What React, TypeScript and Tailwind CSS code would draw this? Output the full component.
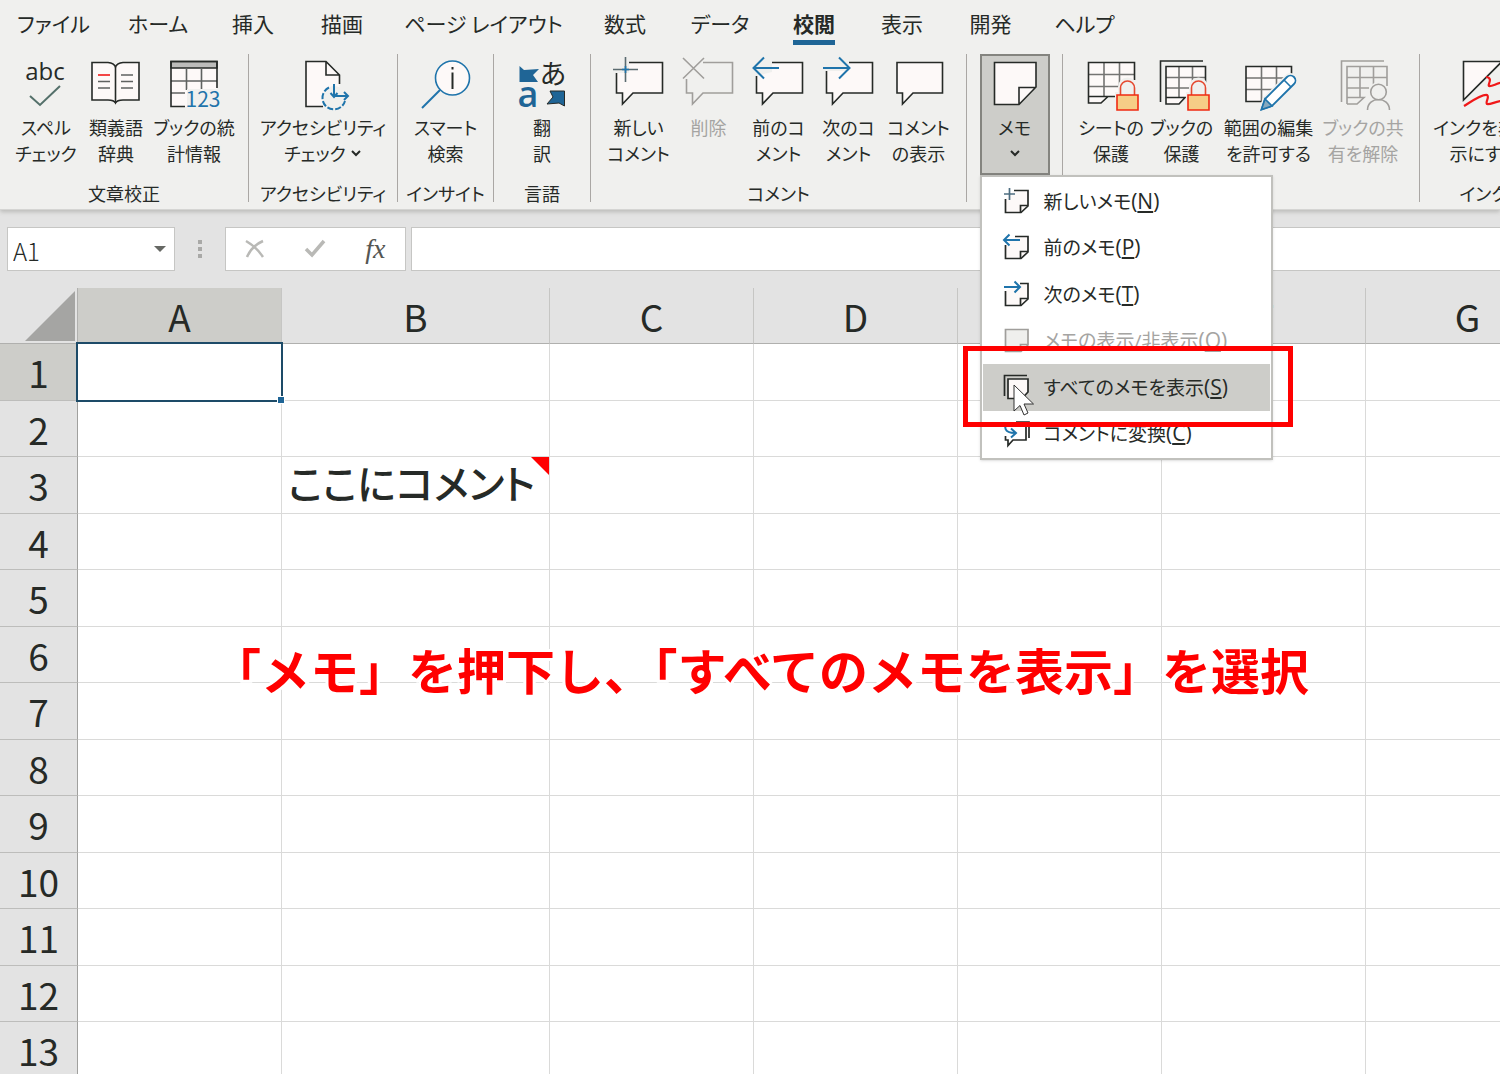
import { ReactNode, useState } from "react";

interface IIconProps {
  children: ReactNode;
  color?: string;
}

interface IRibbonItem {
  name: string;
  lines: string[];
  icon: ReactNode;
  width: string;
  disabled?: boolean;
  arrow?: boolean;
}

interface IMemoItem {
  text: string;
  accessKey: string;
  icon: ReactNode;
  disabled?: boolean;
  selected?: boolean;
}

const BLUE = "#1f74ab";
const DARK = "#262a27";
const GRAY = "#a09e9b";
const PAPER = "#fdf9f8";

const tabs = [
  { name: "ファイル", width: "w-[107px]" },
  { name: "ホーム", width: "w-[102px]" },
  { name: "挿入", width: "w-[88px]" },
  { name: "描画", width: "w-[90px]" },
  { name: "ページ レイアウト", width: "w-[193px]" },
  { name: "数式", width: "w-[90px]" },
  { name: "データ", width: "w-[100px]" },
  { name: "校閲", width: "w-[88px]" },
  { name: "表示", width: "w-[88px]" },
  { name: "開発", width: "w-[89px]" },
  { name: "ヘルプ", width: "w-[99px]" },
];

const columns = [
  { name: "A", width: "w-[204px]" },
  { name: "B", width: "w-[268px]" },
  { name: "C", width: "w-[204px]" },
  { name: "D", width: "w-[204px]" },
  { name: "E", width: "w-[204px]" },
  { name: "F", width: "w-[204px]" },
  { name: "G", width: "w-[204px]" },
];

const rows = [1, 2, 3, 4, 5, 6, 7, 8, 9, 10, 11, 12, 13];

function Icon({ children, color = DARK }: IIconProps) {
  return (
    <svg
      className="h-14 w-14 shrink-0 overflow-visible"
      viewBox="0 0 56 56"
      fill="none"
      stroke={color}
      strokeWidth="1.6"
      aria-hidden="true"
    >
      {children}
    </svg>
  );
}

function SmallIcon({ children, color = DARK }: IIconProps) {
  return (
    <svg
      className="h-7 w-7 shrink-0 overflow-visible"
      viewBox="0 0 28 28"
      fill="none"
      stroke={color}
      strokeWidth="1.7"
      aria-hidden="true"
    >
      {children}
    </svg>
  );
}

function Lock() {
  return (
    <>
      <path d="M32 54V34h3v-5a9.500 9.500 0 0 1 19 0v5h3v20z" fill="#f0f0ee" stroke="none" />
      <path d="M37.500 37v-7a7 7 0 0 1 14 0v7" stroke="#e5482f" />
      <path d="M34 37h21v15H34z" fill="#f6cd86" stroke="#f02a12" />
    </>
  );
}

function BookGrid() {
  return (
    <>
      <path d="M6.500 44V3H49" />
      <path d="M12 46V8.500H51.500V40H29L25 46z" fill={PAPER} stroke="none" />
      <path d="M12 19.500H51.500M12 30H51.500M25 8.500V40M38.500 8.500V40" stroke="#747472" />
      <path d="M51.500 26V8.500H12V46H25L31 39.500H12" />
    </>
  );
}

const proofing: IRibbonItem[] = [
  {
    name: "spelling",
    lines: ["スペル", "チェック"],
    width: "w-[70px]",
    icon: (
      <Icon>
        <text
          x="27"
          y="22"
          textAnchor="middle"
          fontSize="24"
          fill={DARK}
          stroke="none"
          className="font-['Open_Sans',sans-serif]"
        >
          abc
        </text>
        <path d="M12 38L22 47L42 28" stroke="#54706a" strokeWidth="2" />
      </Icon>
    ),
  },
  {
    name: "thesaurus",
    lines: ["類義語", "辞典"],
    width: "w-[70px]",
    icon: (
      <Icon>
        <path
          d="M4 4.500H20Q26 5 27.500 9Q29 5 35 4.500H51V42H35Q29 42 27.500 45Q26 42 20 42H4Z"
          fill={PAPER}
        />
        <path d="M27.500 9V45" />
        <path d="M10 23.500H22M10 30H22M33 17H45M33 23.500H45M33 30H45" stroke="#5f6260" />
        <path d="M10 17H22" stroke="#f01818" />
      </Icon>
    ),
  },
  {
    name: "statistics",
    lines: ["ブックの統", "計情報"],
    width: "w-[86px]",
    icon: (
      <Icon>
        <path d="M5 3.500H51V48.500H5z" fill={PAPER} stroke="none" />
        <path d="M5 3.500H51V10H5z" fill="#bcbcba" />
        <path d="M5 23H51M5 35H19M20.500 10V32M35.500 10V32" stroke="#5f6260" />
        <path d="M51 30V3.500H5V48.500H19" />
        <path d="M21 31H54V51H21z" fill="#f0f0ee" stroke="none" />
        <text
          x="37"
          y="49"
          textAnchor="middle"
          fontSize="21"
          fill={BLUE}
          stroke="none"
        >
          123
        </text>
      </Icon>
    ),
  },
];

const accessibility: IRibbonItem[] = [
  {
    name: "accessibility",
    lines: ["アクセシビリティ", "チェック"],
    width: "w-[148px]",
    arrow: true,
    icon: (
      <Icon>
        <path d="M11 48V3.500H31L44.500 17V30L30 48z" fill={PAPER} stroke="none" />
        <path d="M28 48.500H11V3.500H31L44.500 17V26M31 3.500V17H44.500" />
        <circle cx="39" cy="40" r="12" fill="#f0f0ee" stroke="none" />
        <path
          d="M34 29.500A11.500 11.500 0 1 0 50 43"
          stroke={BLUE}
          strokeWidth="2"
          strokeDasharray="6 2"
        />
        <path d="M39 26V39M35.500 35L39 39L42.500 35M40 38H53M49 34L53 38L49 42" stroke={BLUE} strokeWidth="2" />
      </Icon>
    ),
  },
];

const insights: IRibbonItem[] = [
  {
    name: "lookup",
    lines: ["スマート", "検索"],
    width: "w-[94px]",
    icon: (
      <Icon>
        <circle cx="34.500" cy="20" r="17" fill={PAPER} stroke={BLUE} />
        <path d="M22 32L4 50" stroke={BLUE} strokeWidth="2" />
        <path d="M34.500 9v2.500M34.500 14.500V31" strokeWidth="2" />
      </Icon>
    ),
  },
];

const language: IRibbonItem[] = [
  {
    name: "translate",
    lines: ["翻", "訳"],
    width: "w-[94px]",
    icon: (
      <Icon>
        <path d="M5.500 8L10 12L25 11L19 17L24 24H5.500z" fill="#1f6596" stroke="none" />
        <path d="M36 33H50.500V48L45 45L33 46L39 39z" fill="#1f6596" strokeWidth="1" />
        <text x="39" y="26" textAnchor="middle" fontSize="27" fill={DARK} stroke="none">
          あ
        </text>
        <text
          x="14"
          y="49"
          textAnchor="middle"
          fontSize="36"
          fontWeight="600"
          fill="#1f6596"
          stroke="none"
          className="font-['Open_Sans',sans-serif]"
        >
          a
        </text>
      </Icon>
    ),
  },
];

const comments: IRibbonItem[] = [
  {
    name: "new-comment",
    lines: ["新しい", "コメント"],
    width: "w-[70px]",
    icon: (
      <Icon>
        <path d="M18 4.500H51.500V35H22L11.500 46V35H5.500V15L18 15z" fill={PAPER} stroke="none" />
        <path d="M18 4.500H51.500V35H22L11.500 46V35H5.500V15" />
        <path d="M14.500 -1V24M2 11.500H27" stroke="#5b6b70" />
        <path d="M14.500 8V15M11 11.500H18" stroke={BLUE} />
      </Icon>
    ),
  },
  {
    name: "delete-comment",
    lines: ["削除"],
    width: "w-[70px]",
    disabled: true,
    icon: (
      <Icon color={GRAY}>
        <path d="M22 4.500H51.500V35H22L11.500 46V35H5.500V21" />
        <path d="M2 0L23 20.500M23 0L2 20.500" />
      </Icon>
    ),
  },
  {
    name: "previous-comment",
    lines: ["前のコ", "メント"],
    width: "w-[70px]",
    icon: (
      <Icon>
        <path d="M21 4.500H51.500V35H22L11.500 46V35H5.500V18L21 14z" fill={PAPER} stroke="none" />
        <path d="M21 4.500H51.500V35H22L11.500 46V35H5.500V18" />
        <path d="M28 10H2M13 -0.500L2.500 10L13 20.500" stroke={BLUE} strokeWidth="2" />
      </Icon>
    ),
  },
  {
    name: "next-comment",
    lines: ["次のコ", "メント"],
    width: "w-[70px]",
    icon: (
      <Icon>
        <path d="M28 4.500H51.500V35H22L11.500 46V35H5.500V13H28z" fill={PAPER} stroke="none" />
        <path d="M28 4.500H51.500V35H22L11.500 46V35H5.500V13" />
        <path d="M2 10H28M18 -0.500L28.500 10L18 20.500" stroke={BLUE} strokeWidth="2" />
      </Icon>
    ),
  },
  {
    name: "show-comments",
    lines: ["コメント", "の表示"],
    width: "w-[70px]",
    icon: (
      <Icon>
        <path d="M6 4.500H51.500V35H22L11.500 46V35H6z" fill={PAPER} />
      </Icon>
    ),
  },
];

const protection: IRibbonItem[] = [
  {
    name: "protect-sheet",
    lines: ["シートの", "保護"],
    width: "w-[70px]",
    icon: (
      <Icon>
        <path d="M5.500 4.500H51.500V38H25L18 45H5.500z" fill={PAPER} stroke="none" />
        <path d="M5.500 16.500H51.500M5.500 28.500H40M21 4.500V38M36.500 4.500V38" stroke="#747472" />
        <path d="M51.500 22V4.500H5.500V45H18L25 38.500H33M5.500 38.500H25" />
        <Lock />
      </Icon>
    ),
  },
  {
    name: "protect-book",
    lines: ["ブックの", "保護"],
    width: "w-[71px]",
    icon: (
      <Icon>
        <BookGrid />
        <Lock />
      </Icon>
    ),
  },
  {
    name: "allow-edit",
    lines: ["範囲の編集", "を許可する"],
    width: "w-[103px]",
    icon: (
      <Icon>
        <path d="M5 8.500H50.500V43.500H5z" fill={PAPER} stroke="none" />
        <path d="M5 20H45M5 31.500H34M20.500 8.500V43.500M35.500 8.500V30" stroke="#747472" />
        <path d="M50.500 16V8.500H5V43.500H22" />
        <path d="M30 44L52 24V46H28z" fill="#f0f0ee" stroke="none" />
        <path
          d="M20.500 51.500L24 41L46 19A4.900 4.900 0 0 1 53 26L31 48z"
          fill="#fff"
          stroke="#f0f0ee"
          strokeWidth="5"
        />
        <path
          d="M20.500 51.500L24 41L46 19A4.900 4.900 0 0 1 53 26L31 48z"
          fill="#fff"
          stroke={BLUE}
          strokeWidth="1.8"
        />
        <path d="M20.500 51.500L24 41L31 48z" fill="#86a9be" stroke={BLUE} />
        <path d="M43 22L50 29" stroke={BLUE} />
      </Icon>
    ),
  },
  {
    name: "unshare-book",
    lines: ["ブックの共", "有を解除"],
    width: "w-[86px]",
    disabled: true,
    icon: (
      <Icon color={GRAY}>
        <path d="M6.500 44V3H49M12 46V8.500H52V28" />
        <path d="M12 19.500H52M12 30H34M25 8.500V40M38.500 8.500V28M12 46H22L29 39.500H12" />
        <circle cx="43.500" cy="34" r="10" fill="#f0f0ee" stroke="none" />
        <path d="M32.500 52C32.500 38 54.500 38 54.500 52" fill="#f0f0ee" />
        <circle cx="43.500" cy="34" r="7.800" fill="#f0f0ee" />
      </Icon>
    ),
  },
];

const ink: IRibbonItem[] = [
  {
    name: "hide-ink",
    lines: ["インクを非表", "示にする"],
    width: "w-[110px]",
    icon: (
      <Icon>
        <path d="M7.500 42V3.500H46z" fill={PAPER} />
        <path
          d="M30 19C38 20 31 27 33 28C36 29 42 24 50 24M8 48C16 43 26 36 31 37C34 39 29 44 31 46C34 47 40 43 50 42"
          stroke="#f01818"
          strokeWidth="2.200"
        />
      </Icon>
    ),
  },
];

const memoItems: IMemoItem[] = [
  {
    text: "新しいメモ",
    accessKey: "N",
    icon: (
      <SmallIcon>
        <path d="M12 2.500H26V18L19 24.500H3.500V11" fill={PAPER} />
        <path d="M18.500 24.500V17.500H26" />
        <path d="M7.500 0V12M2 6H13" stroke="#4d6d80" />
      </SmallIcon>
    ),
  },
  {
    text: "前のメモ",
    accessKey: "P",
    icon: (
      <SmallIcon>
        <path d="M13 2.500H26V18L19 24.500H3.500V11" fill={PAPER} />
        <path d="M18.500 24.500V17.500H26" />
        <path d="M18 6H2M7.500 0.500L2 6L7.500 11.500" stroke={BLUE} strokeWidth="2" />
      </SmallIcon>
    ),
  },
  {
    text: "次のメモ",
    accessKey: "T",
    icon: (
      <SmallIcon>
        <path d="M18 2.500H26V18L19 24.500H3.500V10" fill={PAPER} />
        <path d="M18.500 24.500V17.500H26" />
        <path d="M2 6H18M12.500 0.500L18 6L12.500 11.500" stroke={BLUE} strokeWidth="2" />
      </SmallIcon>
    ),
  },
  {
    text: "メモの表示/非表示",
    accessKey: "O",
    disabled: true,
    icon: (
      <SmallIcon color={GRAY}>
        <path d="M3.500 2.500H26V18L19 24.500H3.500z" fill="#efefed" />
        <path d="M18.500 24.500V17.500H26" />
      </SmallIcon>
    ),
  },
  {
    text: "すべてのメモを表示",
    accessKey: "S",
    selected: true,
    icon: (
      <SmallIcon>
        <path d="M2.500 22V1.500H25" />
        <path d="M6 5H26V18L20 24.500H6z" fill={PAPER} />
      </SmallIcon>
    ),
  },
  {
    text: "コメントに変換",
    accessKey: "C",
    icon: (
      <SmallIcon>
        <path d="M14 2H27V18M12 5H24V20H11L6 25.500V20H3.500V16" fill="none" />
        <path d="M7 3C1 6 2 13 13 13M9 8.500L14 13L9 17.500" stroke={BLUE} strokeWidth="2" />
      </SmallIcon>
    ),
  },
];

function Chevron() {
  return (
    <svg className="h-2 w-3" viewBox="0 0 12 8" fill="none" stroke={DARK} strokeWidth="2" aria-hidden="true">
      <path d="M2 2L6 6L10 2" />
    </svg>
  );
}

function RibbonButton(props: { item: IRibbonItem }) {
  const item = props.item;
  return (
    <button
      type="button"
      disabled={item.disabled}
      className={`flex h-[120px] shrink-0 flex-col items-center pt-1 text-lg leading-[26px] whitespace-nowrap disabled:text-[#a5a4a2] ${item.width}`}
    >
      {item.icon}
      {item.lines.map((line, index) => (
        <span key={line} className="flex items-center gap-1">
          {line}
          {item.arrow && index === item.lines.length - 1 && <Chevron />}
        </span>
      ))}
    </button>
  );
}

function RibbonGroup(props: { label: string; items: IRibbonItem[]; width: string }) {
  return (
    <section
      className={`flex h-[148px] shrink-0 flex-col items-center justify-between border-r border-[#aaa7a4] ${props.width}`}
    >
      <div className="flex">
        {props.items.map((item) => (
          <RibbonButton key={item.name} item={item} />
        ))}
      </div>
      <h2 className="h-5 text-lg leading-[22px] whitespace-nowrap">{props.label}</h2>
    </section>
  );
}

function MemoMenu() {
  return (
    <ul className="absolute top-full left-0 z-20 w-[293px] border-2 border-[#c1c1bd] bg-white p-px font-['Open_Sans','Noto_Sans_CJK_JP',sans-serif] text-[19px] shadow-sm">
      {memoItems.map((item) => (
        <li key={item.accessKey} className="relative odd:h-[47px] even:h-[46px]">
          <button
            type="button"
            disabled={item.disabled}
            className={`flex h-full w-full items-center gap-[14px] pl-[19px] text-left whitespace-nowrap disabled:text-[#a5a4a2] ${
              item.selected ? "bg-[#cdcdc9]" : ""
            }`}
          >
            {item.icon}
            <span>
              {item.text}
              <span className="text-[21px]">
                (<span className="underline underline-offset-2">{item.accessKey}</span>)
              </span>
            </span>
          </button>
          {item.selected && (
            <>
              <svg
                className="absolute top-5 left-[30px] h-8 w-6"
                viewBox="0 0 24 32"
                fill="#fff"
                stroke="#333"
                aria-hidden="true"
              >
                <path d="M1 1V27L7 21.500L11 31L15 29L11 20H20.500z" />
              </svg>
              <span className="pointer-events-none absolute -top-[18px] -right-[23px] -bottom-4 -left-5 z-10 border-[5px] border-[#ff0000]" />
            </>
          )}
        </li>
      ))}
    </ul>
  );
}

function Ribbon() {
  return (
    <div className="flex pt-[6px]">
      <RibbonGroup label="文章校正" items={proofing} width="w-[249px]" />
      <RibbonGroup label="アクセシビリティ" items={accessibility} width="w-[149px]" />
      <RibbonGroup label="インサイト" items={insights} width="w-[96px]" />
      <RibbonGroup label="言語" items={language} width="w-[97px]" />
      <RibbonGroup label="コメント" items={comments} width="w-[376px]" />
      <section className="flex h-[148px] w-24 shrink-0 justify-center border-r border-[#aaa7a4]">
        <div className="relative h-[121px]">
          <button
            type="button"
            aria-expanded="true"
            className="flex h-full w-[70px] flex-col items-center border-2 border-[#84847f] bg-[#cdcdc9] pt-[2px] text-lg leading-[26px]"
          >
            <Icon>
              <path d="M7.500 4.500H49V29L32 46.500H7.500zM32 46.500V29.500H49" fill={PAPER} />
            </Icon>
            メモ
            <span className="flex h-[26px] items-center">
              <Chevron />
            </span>
          </button>
          <MemoMenu />
        </div>
      </section>
      <RibbonGroup label="" items={protection} width="w-[357px]" />
      <RibbonGroup label="インク" items={ink} width="w-[128px]" />
    </div>
  );
}

function FormulaBar() {
  const [cell, setCell] = useState<string>("A1");
  const [formula, setFormula] = useState<string>("");

  return (
    <div className="flex h-[78px] shrink-0 items-start pt-[17px] pl-[7px]">
      <div className="flex h-11 w-[168px] shrink-0 items-center border border-[#c6c6c4] bg-white">
        <input
          className="w-full min-w-0 flex-1 pt-1 pl-[5px] text-2xl font-light outline-none"
          aria-label="名前ボックス"
          value={cell}
          onChange={(event) => setCell(event.target.value)}
        />
        <button type="button" aria-label="名前の一覧" className="px-2">
          <svg className="h-[6px] w-3" viewBox="0 0 12 6" fill="#666864">
            <path d="M0 0H12L6 6z" />
          </svg>
        </button>
      </div>
      <svg className="mx-[22px] mt-3 h-5 w-[6px] shrink-0" viewBox="0 0 6 20" fill="#a9a9a7" aria-hidden="true">
        <path d="M1 1h4v4H1zM1 8h4v4H1zM1 15h4v4H1z" />
      </svg>
      <div className="flex h-11 w-[181px] shrink-0 items-center justify-around border border-[#c6c6c4] bg-white">
        <button type="button" aria-label="キャンセル">
          <svg className="h-5 w-5" viewBox="0 0 20 20" fill="none" stroke="#b9b9b6" strokeWidth="2.500">
            <path d="M1 2C8 6 14 12 18 18M18 2C11 5 5 11 2 18" />
          </svg>
        </button>
        <button type="button" aria-label="入力">
          <svg className="h-5 w-[22px]" viewBox="0 0 22 20" fill="none" stroke="#b9b9b6" strokeWidth="3.500">
            <path d="M2 10L8 16L20 2" />
          </svg>
        </button>
        <button
          type="button"
          aria-label="関数の挿入"
          className="font-['Liberation_Serif',serif] text-[28px] leading-8 text-[#555653] italic"
        >
          fx
        </button>
      </div>
      <input
        className="ml-[5px] h-11 min-w-0 flex-1 border border-r-0 border-[#c6c6c4] bg-white px-2 text-2xl outline-none"
        aria-label="数式バー"
        value={formula}
        onChange={(event) => setFormula(event.target.value)}
      />
    </div>
  );
}

function Sheet() {
  return (
    <main className="relative isolate min-h-0 flex-1 overflow-hidden bg-white">
      <table className="w-[1570px] table-fixed border-separate border-spacing-0 text-[37px] leading-[48px]">
        <thead>
          <tr className="h-14 bg-[#e3e3e3]">
            <th className="w-[78px] border-r border-b border-[#b0b0ae] p-0">
              <svg className="ml-auto h-[50px] w-[52px] pr-[2px]" viewBox="0 0 50 50" fill="#a5a5a3" aria-hidden="true">
                <path d="M50 0V50H0z" />
              </svg>
            </th>
            {columns.map((column) => (
              <th
                key={column.name}
                scope="col"
                className={`border-r border-b border-r-[#c6c6c4] border-b-[#b0b0ae] p-0 font-normal ${column.width} ${
                  column.name === "A" ? "bg-[#cdcdc9]" : ""
                }`}
              >
                {column.name}
              </th>
            ))}
          </tr>
        </thead>
        <tbody>
          {rows.map((row) => (
            <tr key={row} className="odd:h-[57px] even:h-14">
              <th
                scope="row"
                className={`border-r border-b border-r-[#a0a09e] border-b-[#bdbdbb] p-0 font-normal ${
                  row === 1 ? "bg-[#cdcdc9]" : "bg-[#e3e3e3]"
                }`}
              >
                {row}
              </th>
              {columns.map((column) => (
                <td key={column.name} className="relative border-r border-b border-[#dadad9] p-0 whitespace-nowrap">
                  {row === 1 && column.name === "A" && (
                    <span className="absolute -inset-[2px] z-10 border-2 border-[#1d4b68]">
                      <span className="absolute -right-1 -bottom-1 h-2 w-2 border border-white bg-[#1f6596]" />
                    </span>
                  )}
                  {row === 3 && column.name === "B" && (
                    <>
                      <p className="pb-[6px] pl-[6px] text-[40px] leading-[48px] font-medium">ここにコメント</p>
                      <svg className="absolute top-0 right-0 h-[18px] w-[18px]" viewBox="0 0 18 18" fill="#f00">
                        <path d="M0 0H18V18z" />
                      </svg>
                    </>
                  )}
                </td>
              ))}
            </tr>
          ))}
        </tbody>
      </table>
      <p className="absolute top-[345px] left-[212px] text-[49px] leading-[72px] font-bold whitespace-nowrap text-[#ff0000] [-webkit-text-stroke:6px_white] [font-feature-settings:normal] [paint-order:stroke_fill]">
        「メモ」を押下し、「すべてのメモを表示」を選択
      </p>
    </main>
  );
}

export default function App() {
  return (
    <div
      lang="ja"
      className="flex h-screen flex-col overflow-hidden bg-[#e3e3e3] font-['Noto_Sans_CJK_JP',sans-serif] text-[#262a27] [font-feature-settings:'palt']"
    >
      <header className="relative z-10 h-[210px] shrink-0 border-b border-[#d5d5d3] bg-[#f0f0ee] shadow-[0_2px_4px_#bbbbb9]">
        <nav className="flex h-12 text-[21px] leading-[46px]">
          {tabs.map((tab) => (
            <button
              key={tab.name}
              type="button"
              className={`flex shrink-0 justify-center whitespace-nowrap ${tab.width}`}
            >
              <span
                className={tab.name === "校閲" ? "h-[45px] border-b-[5px] border-[#1f6596] font-bold" : "h-[45px]"}
              >
                {tab.name}
              </span>
            </button>
          ))}
        </nav>
        <Ribbon />
      </header>
      <FormulaBar />
      <Sheet />
    </div>
  );
}
